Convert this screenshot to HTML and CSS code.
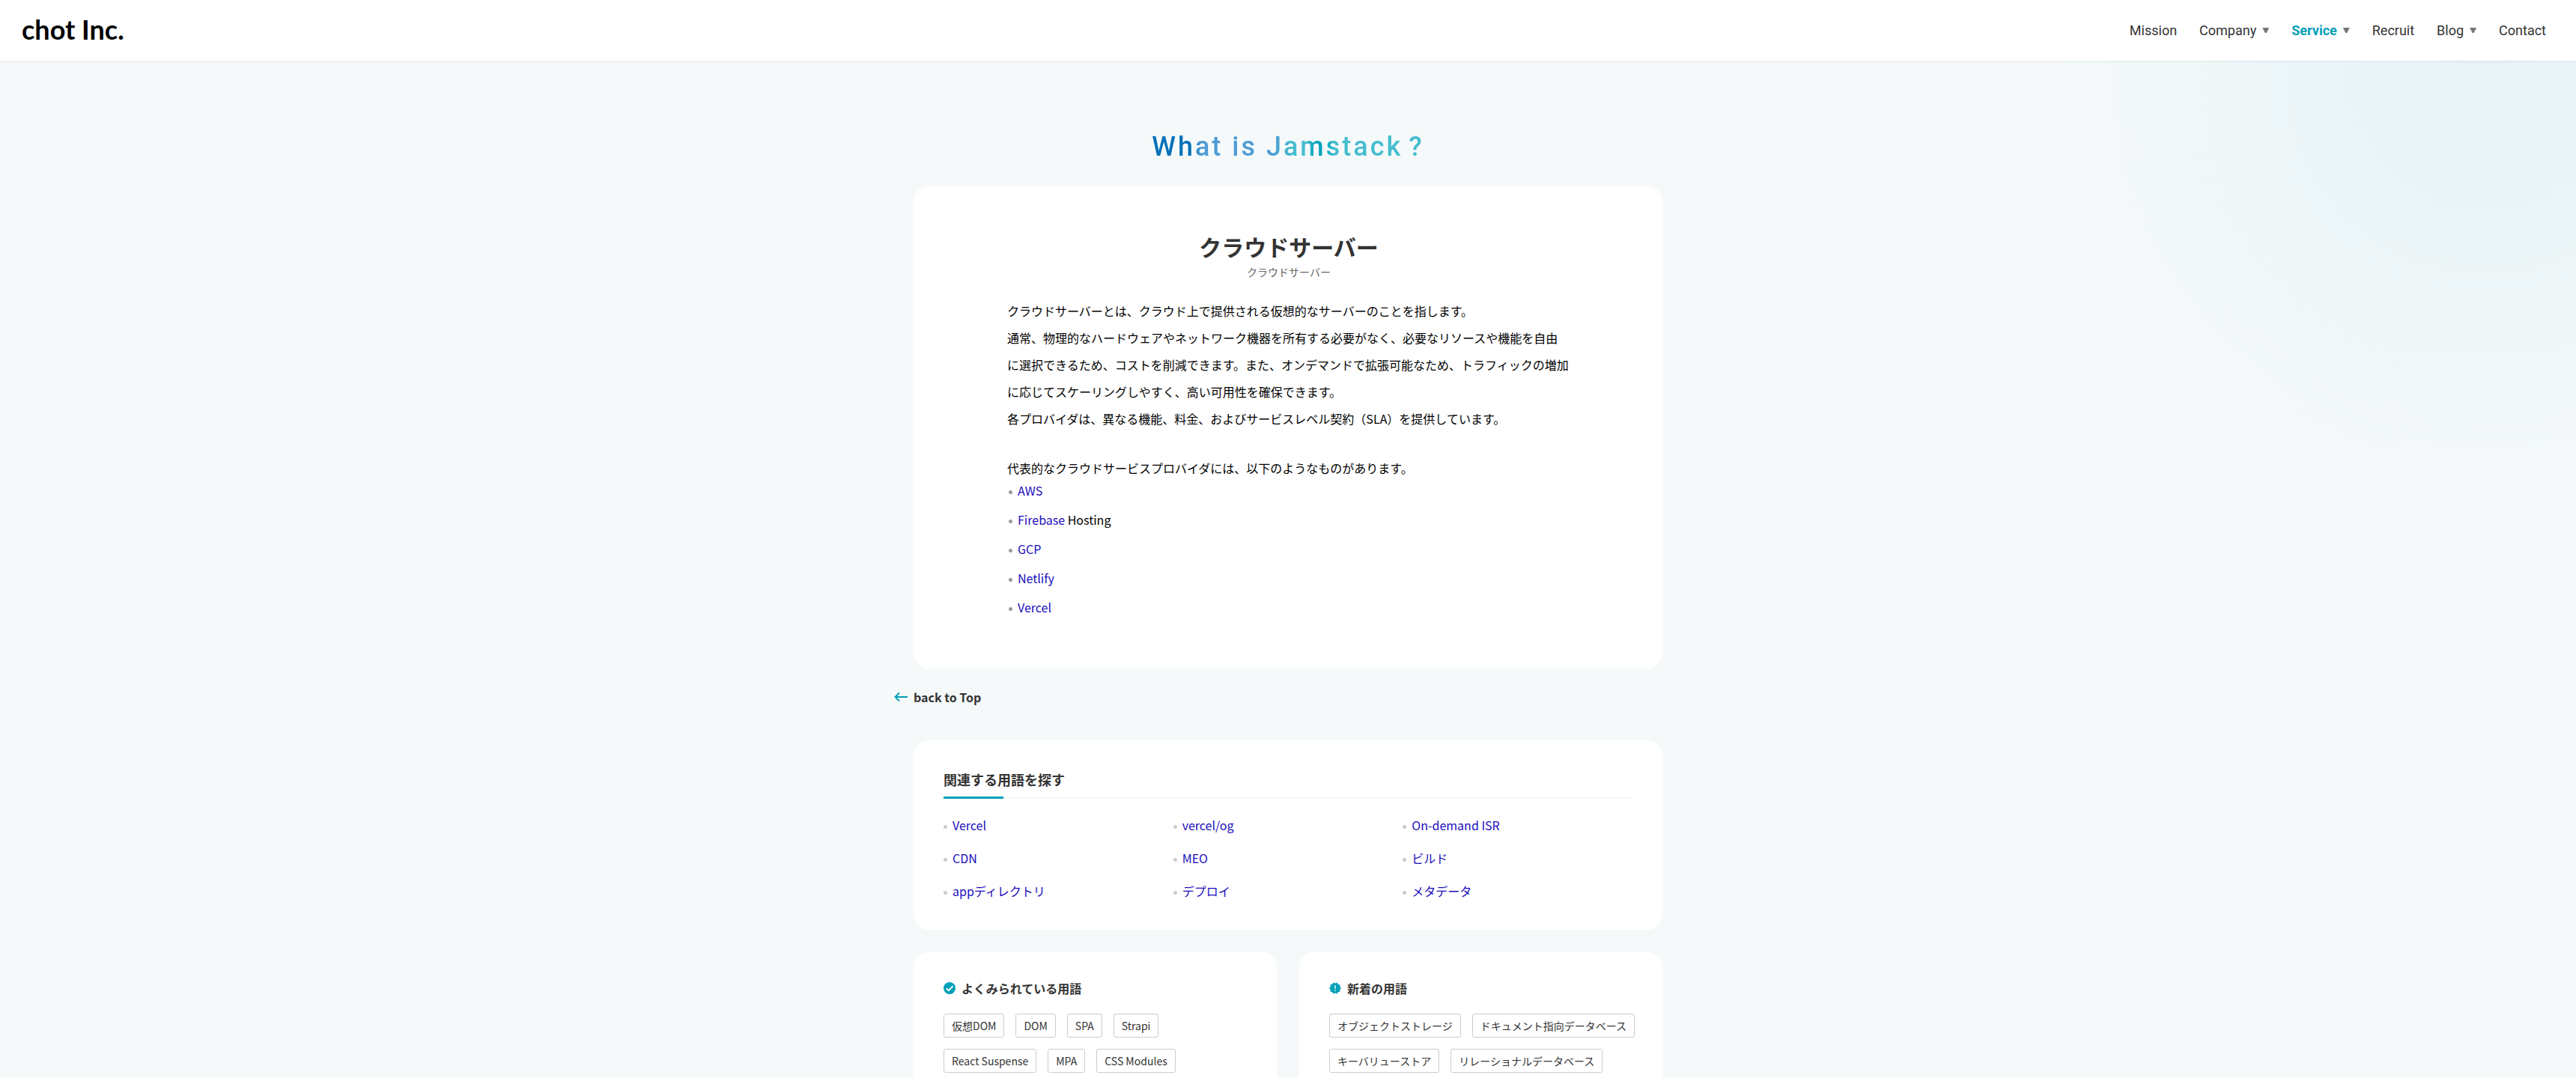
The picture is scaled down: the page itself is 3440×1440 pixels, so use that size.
FILE: index.html
```html
<!DOCTYPE html>
<html lang="ja">
<head>
<meta charset="utf-8">
<meta name="viewport" content="width=device-width, initial-scale=1">
<title>クラウドサーバー | chot Inc.</title>
<link rel="stylesheet" href="styles.css">
</head>
<body>
<header class="header">
  <a class="logo" href="#">chot Inc.</a>
  <nav class="nav">
    <a href="#">Mission</a>
    <a class="has-menu" href="#">Company</a>
    <a class="has-menu is-current" href="#">Service</a>
    <a href="#">Recruit</a>
    <a class="has-menu" href="#">Blog</a>
    <a href="#">Contact</a>
  </nav>
</header>
<main class="main">
  <p class="page-title">What is Jamstack<span class="mark">?</span></p>
  <article class="card article">
    <h1 class="term">クラウドサーバー</h1>
    <p class="reading">クラウドサーバー</p>
    <div class="body">
      <p>クラウドサーバーとは、クラウド上で提供される仮想的なサーバーのことを指します。<br>通常、物理的なハードウェアやネットワーク機器を所有する必要がなく、必要なリソースや機能を自由<br>に選択できるため、コストを削減できます。また、オンデマンドで拡張可能なため、トラフィックの増加<br>に応じてスケーリングしやすく、高い可用性を確保できます。<br>各プロバイダは、異なる機能、料金、およびサービスレベル契約（SLA）を提供しています。</p>
      <p>代表的なクラウドサービスプロバイダには、以下のようなものがあります。</p>
      <ul class="providers">
        <li><a href="#">AWS</a></li>
        <li><a href="#">Firebase</a> Hosting</li>
        <li><a href="#">GCP</a></li>
        <li><a href="#">Netlify</a></li>
        <li><a href="#">Vercel</a></li>
      </ul>
    </div>
  </article>
  <a class="back" href="#">
    <svg class="back-icon" viewBox="0 0 18 16" aria-hidden="true"><path d="M7 2.500 1.500 8 7 13.500M1.500 8H18"/></svg>
    <span>back to Top</span>
  </a>
  <section class="card related">
    <h2 class="section-title">関連する用語を探す</h2>
    <ul class="related-list">
      <li><a href="#">Vercel</a></li>
      <li><a href="#">vercel/og</a></li>
      <li><a href="#">On-demand ISR</a></li>
      <li><a href="#">CDN</a></li>
      <li><a href="#">MEO</a></li>
      <li><a href="#">ビルド</a></li>
      <li><a href="#">appディレクトリ</a></li>
      <li><a href="#">デプロイ</a></li>
      <li><a href="#">メタデータ</a></li>
    </ul>
  </section>
  <div class="columns">
    <section class="card terms">
      <h2 class="terms-title">
        <svg viewBox="0 0 16 16" aria-hidden="true"><circle cx="8" cy="8" r="8"/><path class="tick" d="M3.800 8.200 6.800 11.100 12.400 5.300"/></svg>
        よくみられている用語
      </h2>
      <div class="tags">
        <a href="#">仮想DOM</a><a href="#">DOM</a><a href="#">SPA</a><a href="#">Strapi</a>
        <a href="#">React Suspense</a><a href="#">MPA</a><a href="#">CSS Modules</a>
      </div>
    </section>
    <section class="card terms">
      <h2 class="terms-title">
        <svg viewBox="1 1 22 22" aria-hidden="true"><path d="M23 12l-2.440-2.780.340-3.680-3.610-.820-1.890-3.180L12 3 8.600 1.540 6.710 4.720l-3.610.810.340 3.680L1 12l2.440 2.780-.340 3.690 3.610.820 1.890 3.180L12 21l3.400 1.460 1.890-3.180 3.610-.820-.340-3.680L23 12zm-10 5h-2v-2h2v2zm0-4h-2V7h2v6z"/></svg>
        新着の用語
      </h2>
      <div class="tags">
        <a href="#">オブジェクトストレージ</a><a href="#">ドキュメント指向データベース</a>
        <a href="#">キーバリューストア</a><a href="#">リレーショナルデータベース</a>
      </div>
    </section>
  </div>
</main>
</body>
</html>
```
FILE: styles.css
```css
:root {
  --teal: #00a0b8;
  --ink: #333;
  --link: #1a0dbb;
}

* { box-sizing: border-box; }

body {
  margin: 0;
  min-height: 100vh;
  overflow-x: hidden;
  color: var(--ink);
  font: 400 16px/24px "Noto Sans CJK JP", sans-serif;
  background: #f5f9fa radial-gradient(circle 600px at calc(100% - 120px) 100px, #e7f4f6, #e9f4f6 25%, #eff7f9 60%, #f3f8f8 82%, #f5f9fa) no-repeat;
}

h1, h2, p, ul { margin: 0; padding: 0; }
ul { list-style: none; }
a { color: inherit; text-decoration: none; }

.header {
  position: relative;
  display: flex;
  align-items: center;
  justify-content: space-between;
  height: 81px;
  padding: 0 40px 0 29px;
  background: #fff;
  box-shadow: 0 1px 4px rgba(0, 0, 0, .06);
}

.logo {
  padding-bottom: 4px;
  color: #000;
  font: 700 36px/40px "Lato", sans-serif;
}

.nav {
  display: flex;
  gap: 30px;
  font: 400 18px/24px "Roboto", sans-serif;
}

.nav a { display: flex; align-items: center; }
.nav .is-current { color: var(--teal); font-weight: 700; }

.has-menu::after {
  content: "";
  width: 9px;
  height: 7px;
  margin-left: 8px;
  background: #777;
  clip-path: polygon(0 0, 100% 0, 60% 100%, 40% 100%);
}

.main {
  max-width: 1000px;
  margin: 0 auto;
  padding-top: 91px;
}

.page-title {
  width: fit-content;
  margin: 0 auto;
  padding-bottom: 29px;
  color: transparent;
  font: 500 36px/48px "Roboto", sans-serif;
  letter-spacing: 3px;
  background: linear-gradient(90deg, #0071b9 0 14%, #4d9bd5 18% 44%, #45bccf 52% 57%, #00a3b8 60% 64%, #45bccf 67%);
  background-clip: text;
}

.mark { margin-left: 8px; }

.card { background: #fff; border-radius: 20px; }

.article { padding: 58px 123px 70px 125px; }

.term {
  margin-bottom: 2px;
  font-size: 30px;
  line-height: 44px;
  text-align: center;
}

.reading {
  color: #666;
  font-size: 14px;
  line-height: 20px;
  text-align: center;
}

.body { margin-top: 24px; color: #000; }
.body p { line-height: 36px; }
.body p + p { margin-top: 30px; }
.body a, .related-list a { color: var(--link); }

.providers li {
  position: relative;
  padding-left: 14px;
  line-height: 24px;
}

.providers li + li { margin-top: 15px; }

.providers li::before, .related-list li::before {
  content: "";
  position: absolute;
  left: 2px;
  top: 12px;
  width: 5px;
  height: 5px;
  border-radius: 50%;
  background: #999;
}

.back {
  display: flex;
  align-items: center;
  gap: 8px;
  width: fit-content;
  margin: 26px 0 46px -26px;
  font-weight: 700;
}

.back-icon {
  width: 18px;
  height: 16px;
  fill: none;
  stroke: var(--teal);
  stroke-width: 2;
}

.related { padding: 36px 40px 40px; }

.section-title {
  position: relative;
  padding-bottom: 8px;
  border-bottom: 1px solid #eee;
  font-size: 18px;
  line-height: 32px;
}

.section-title::after {
  content: "";
  position: absolute;
  left: 0;
  bottom: -2px;
  width: 80px;
  height: 3px;
  background: var(--teal);
}

.related-list {
  display: grid;
  grid-template-columns: repeat(3, 1fr);
  gap: 20px 0;
  margin-top: 24px;
}

.related-list li { position: relative; padding-left: 12px; }
.related-list li::before { left: 0; background: #ccc; }

.columns {
  display: grid;
  grid-template-columns: 1fr 1fr;
  gap: 30px;
  margin-top: 30px;
}

.terms { padding: 36px 36px 40px 40px; }

.terms-title {
  display: flex;
  align-items: center;
  gap: 8px;
  font-size: 16px;
  line-height: 24px;
}

.terms-title svg { width: 16px; height: 16px; fill: var(--teal); }
.terms-title .tick { fill: none; stroke: #fff; stroke-width: 2; }

.tags {
  display: flex;
  flex-wrap: wrap;
  gap: 15px;
  margin-top: 22px;
}

.tags a {
  padding: 0 10px;
  border: 1px solid #ccc;
  border-radius: 3px;
  font-size: 14px;
  line-height: 30px;
}
```
